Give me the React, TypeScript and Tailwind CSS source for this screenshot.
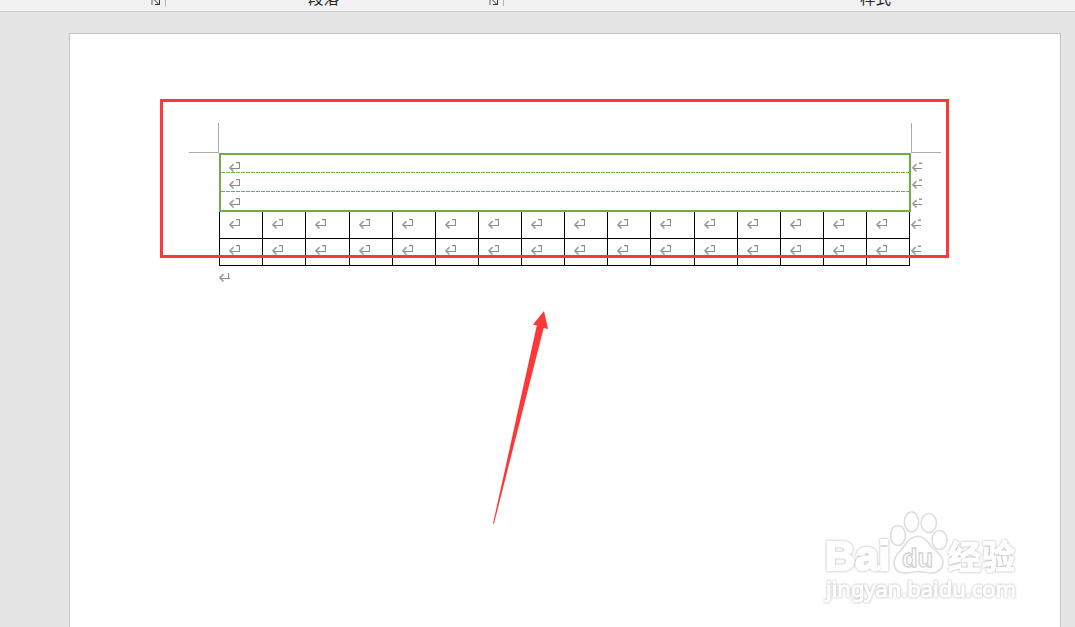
import React from 'react';

interface MarkProps {
  variant?: 'cell' | 'row' | 'end';
}

const Mark: React.FC<MarkProps> = ({ variant = 'cell' }) => (
  <svg className="block shrink-0" width="11" height="10" viewBox="0 0 11 10" fill="none">
    <path d="M4.5 2.2L1 5.8L4.5 9.5" stroke="#a3a3a3" strokeWidth="1.7" />
    <path d={variant === 'row' ? 'M1 6.5H10' : 'M1 6.5H11'} stroke="#8c8c8c" />
    {variant === 'row' && <path d="M7 1.2H10" stroke="#999" strokeWidth="1.6" />}
    {variant === 'cell' && <path d="M7 .6H10.5V7" stroke="#8c8c8c" strokeWidth="1.1" />}
    {variant === 'end' && <path d="M9.5 1V7" stroke="#8c8c8c" strokeWidth="1.1" />}
  </svg>
);

const Launcher: React.FC = () => (
  <div className="flex h-1.5 w-[15px] justify-between">
    <svg width="10" height="6" viewBox="0 0 10 6" fill="none">
      <path d="M1 0V5" stroke="#aaa" strokeWidth="2" />
      <path d="M3.5 0L8 4.5M4 4.5H8.5V0" stroke="#333" />
    </svg>
    <div className="h-1.5 w-px bg-[#b3b3b3]" />
  </div>
);

const Ribbon: React.FC = () => (
  <div className="flex h-3 items-start overflow-hidden border-b border-[#cfcfcf] bg-[#f2f2f2] font-['Noto_Sans_CJK_SC',sans-serif] text-[15.5px] leading-4 text-[#262626]">
    <div className="ml-[151px]">
      <Launcher />
    </div>
    <span className="-mt-[11px] ml-[142px] w-[31px] whitespace-nowrap">段落</span>
    <div className="ml-[150px]">
      <Launcher />
    </div>
    <span className="-mt-[11px] ml-[356px] whitespace-nowrap">样式</span>
  </div>
);

const headerRows = [
  { row: 'h-[17px] pt-[7px]', line: true },
  { row: 'h-[18px] pt-1.5', line: true },
  { row: 'h-[19px] pt-1.5', line: false },
];

const gridRows = ['h-[27px] pt-[7px]', 'h-[27px] pt-1.5'];

const GreenTable: React.FC = () => (
  <div className="h-[59px] w-[692px] border-2 border-[#70ad47]">
    {headerRows.map(({ row, line }, i) => (
      <div key={i}>
        <div className={`flex pl-2 ${row}`}>
          <Mark />
          <div className="ml-[672px]">
            <Mark variant="row" />
          </div>
        </div>
        {line && (
          <div className="h-px bg-[repeating-linear-gradient(90deg,#70ad47_0px,#70ad47_4px,transparent_4px,transparent_5px)]" />
        )}
      </div>
    ))}
  </div>
);

const BlackTable: React.FC = () => (
  <div>
    {gridRows.map((row) => (
      <div key={row} className="flex">
        <div className="flex border-l border-black">
          {Array.from({ length: 16 }, (_, n) => (
            <div
              key={n}
              className={`shrink-0 border-r border-b border-black pl-[9px] ${
                n === 2 || n === 10 ? 'w-11' : 'w-[43px]'
              } ${row}`}
            >
              <Mark />
            </div>
          ))}
        </div>
        <div className={`pl-px ${row}`}>
          <Mark variant="row" />
        </div>
      </div>
    ))}
  </div>
);

const Watermark: React.FC = () => (
  <svg
    className="absolute top-[505px] left-[818px]"
    width="210"
    height="105"
    viewBox="818 505 210 105"
    fill="#fff"
  >
    <g stroke="#dedede" strokeWidth="1.6">
      <ellipse cx="898" cy="535.5" rx="7.5" ry="10" />
      <ellipse cx="911.5" cy="522" rx="7.2" ry="10" />
      <ellipse cx="928.8" cy="523" rx="7.7" ry="9.5" />
      <ellipse cx="939.5" cy="540" rx="7.5" ry="9.5" />
      <path d="M918 536.5C912 536.5 908 540 905 545C901 551 894 555 894 563C894 570 899 573 906 573C911 573 914 571.5 918 571.5C922 571.5 926 573 931 573C938 573 943 569 943 562C943 555 935 551 930 545C927 540 924 536.5 918 536.5Z" />
    </g>
    <g stroke="#fff" className="[filter:drop-shadow(0_0_0.8px_#aaa)]">
      <text
        x="825"
        y="570"
        fontFamily="Liberation Sans"
        fontSize="40"
        fontWeight="bold"
        textLength="65"
        lengthAdjust="spacingAndGlyphs"
        strokeWidth="2.4"
      >
        Bai
      </text>
      <text
        x="948"
        y="569"
        fontFamily="Noto Sans CJK SC"
        fontSize="33"
        fontWeight="700"
        textLength="67"
        strokeWidth="1.2"
      >
        经验
      </text>
      <text
        x="826"
        y="597"
        fontFamily="Noto Sans"
        fontSize="22.5"
        textLength="190"
        lengthAdjust="spacingAndGlyphs"
        strokeWidth="1.2"
      >
        jingyan.baidu.com
      </text>
    </g>
    <text
      x="902"
      y="567"
      fontFamily="Liberation Sans"
      fontSize="25"
      fontWeight="bold"
      textLength="31"
      lengthAdjust="spacingAndGlyphs"
      stroke="#d3d3d3"
      strokeWidth="1.3"
    >
      du
    </text>
  </svg>
);

const App: React.FC = () => {
  return (
    <div className="relative h-[627px] w-[1075px] overflow-hidden bg-[#e5e5e5]">
      <Ribbon />
      <div className="mt-[21px] ml-[69px] h-[594px] w-[992px] border border-b-0 border-[#c3c3c3] bg-white pt-[89px]">
        {/* Page margin corners */}
        <div className="ml-[119px] flex h-[30px] w-[752px] justify-between">
          <div className="w-[30px] border-r border-b border-[#ababab]" />
          <div className="w-[30px] border-b border-l border-[#ababab]" />
        </div>
        <div className="ml-[149px] w-[704px]">
          <GreenTable />
          <BlackTable />
          <div className="mt-1.5">
            <Mark variant="end" />
          </div>
        </div>
      </div>

      <div className="absolute top-[99px] left-[160px] h-[159px] w-[789px] border-3 border-[#fd3838]" />
      <svg
        className="absolute top-[310px] left-[490px]"
        width="62"
        height="216"
        viewBox="490 310 62 216"
      >
        <path d="M544 311L548 329L543.7 328L494 523.5H493L536.8 325.5L533 324.5Z" fill="#fd3838" />
      </svg>
      <Watermark />
    </div>
  );
};

export default App;
